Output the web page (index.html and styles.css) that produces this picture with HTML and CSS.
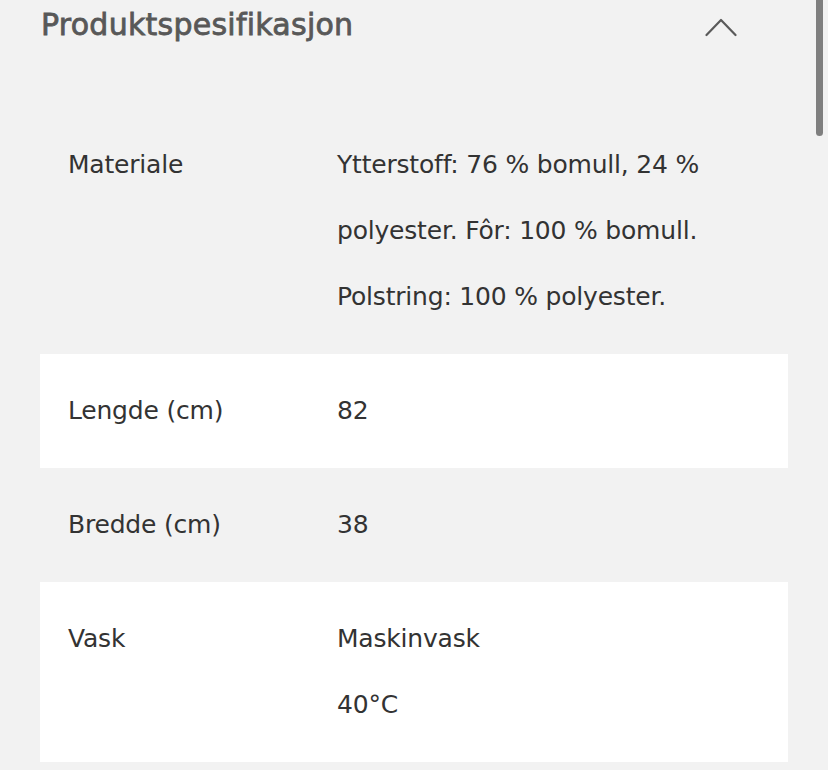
FILE: index.html
```html
<!DOCTYPE html>
<html lang="no">
<head>
<meta charset="utf-8">
<title>Produktspesifikasjon</title>
<link rel="stylesheet" href="styles.css">
</head>
<body>
<div class="panel">
  <div class="header">
    <h2 class="title">Produktspesifikasjon</h2>
    <svg class="chevron" width="32" height="20" viewBox="0 0 32 20" aria-hidden="true">
      <polyline points="1.5,18 16,3 30.5,18" fill="none" stroke="#5a5a5a" stroke-width="2.2" stroke-linecap="round" stroke-linejoin="round"/>
    </svg>
  </div>
  <div class="spec">
    <div class="row">
      <div class="label">Materiale</div>
      <div class="value">Ytterstoff: 76 % bomull, 24 % polyester. Fôr: 100 % bomull. Polstring: 100 % polyester.</div>
    </div>
    <div class="row alt">
      <div class="label">Lengde (cm)</div>
      <div class="value">82</div>
    </div>
    <div class="row">
      <div class="label">Bredde (cm)</div>
      <div class="value">38</div>
    </div>
    <div class="row alt last">
      <div class="label">Vask</div>
      <div class="value">Maskinvask<br>40°C</div>
    </div>
  </div>
</div>
<div class="scrollbar"></div>
</body>
</html>
```
FILE: styles.css
```css
html, body {
  margin: 0;
  padding: 0;
  background: #f2f2f2;
}
body {
  font-family: "DejaVu Sans", "Liberation Sans", sans-serif;
  color: #333333;
  overflow: hidden;
}
.panel {
  margin: 0 40px;
}
.header {
  display: flex;
  align-items: center;
  justify-content: space-between;
  height: 50px;
  padding: 0 51px 0 1px;
}
.title {
  margin: 0;
  font-size: 30px;
  line-height: 50px;
  font-weight: normal;
  color: #585858;
  -webkit-text-stroke: 0.8px #585858;
  letter-spacing: 0.25px;
}
.chevron {
  display: block;
  margin-top: 3px;
}
.spec {
  margin-top: 58px;
}
.row {
  display: grid;
  grid-template-columns: 269px 1fr;
  padding: 24px 28px;
  font-size: 25px;
  line-height: 66px;
  letter-spacing: -0.2px;
}
.alt {
  background: #ffffff;
}
.last {
  box-shadow: 0 2px 0 #cbcbcb;
}
.scrollbar {
  position: absolute;
  top: 0;
  left: 816px;
  width: 7px;
  height: 136px;
  background: #7f7f7f;
  border-radius: 0 0 4px 4px;
}
```
